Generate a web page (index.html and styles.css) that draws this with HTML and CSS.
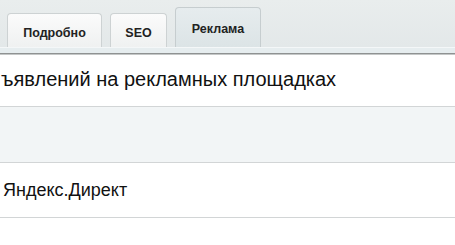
FILE: index.html
```html
<!DOCTYPE html>
<html lang="ru">
<head>
<meta charset="utf-8">
<link rel="stylesheet" href="styles.css">
</head>
<body>
<div class="page">
  <div class="tabbar">
    <div class="tab tab-details"><span>Подробно</span></div>
    <div class="tab tab-seo"><span>SEO</span></div>
    <div class="tab tab-ads active"><span>Реклама</span></div>
  </div>
  <div class="strip"></div>
  <div class="rule"></div>
  <div class="row row-title"><span class="cut">ъявлений на рекламных площадках</span></div>
  <div class="row row-grey"></div>
  <div class="row row-item"><span class="item">Яндекс.Директ</span></div>
  <div class="row row-empty"></div>
</div>
</body>
</html>
```
FILE: styles.css
```css
html, body {
  margin: 0;
  padding: 0;
  background: #ffffff;
}
.page {
  width: 455px;
  height: 245px;
  overflow: hidden;
  font-family: "Liberation Sans", Arial, Helvetica, sans-serif;
  color: #111;
}
.tabbar {
  height: 47px;
  background: linear-gradient(#e9eded, #e3e8e9);
  display: flex;
  align-items: flex-end;
  gap: 8px;
  padding-left: 7px;
  box-sizing: border-box;
}
.tab {
  box-sizing: border-box;
  height: 34px;
  border: 1px solid #cdd2d3;
  border-bottom: none;
  border-radius: 4px 4px 0 0;
  background: linear-gradient(#fbfbfb, #eff1f1);
  display: flex;
  align-items: center;
  justify-content: center;
  font-weight: bold;
  font-size: 12.5px;
  color: #222;
  padding-top: 4px;
}
.tab-details { width: 95px; }
.tab-seo { width: 57px; }
.tab-ads { width: 86px; }
.tab.active {
  height: 40px;
  background: linear-gradient(#e6ecee, #dce4e6);
  border-color: #c6cdcf;
  padding-top: 2px;
  padding-bottom: 0;
}
.strip {
  height: 5px;
  background: #e6edef;
  border-top: 1px solid #f4f7f8;
}
.rule {
  height: 1px;
  background: #8f9292;
  border-bottom: 1px solid #c4c7c7;
}
.row {
  box-sizing: border-box;
  border-bottom: 1px solid #d2d5d6;
  display: flex;
  align-items: center;
  font-size: 18px;
}
.row-title {
  height: 52px;
  padding-left: 1px;
  padding-bottom: 3px;
  font-size: 20px;
}
.row-grey {
  height: 56px;
  background: #f2f5f6;
}
.row-item {
  height: 55px;
  padding-left: 3px;
}
.row-empty {
  height: 40px;
  border-bottom: none;
}
```
